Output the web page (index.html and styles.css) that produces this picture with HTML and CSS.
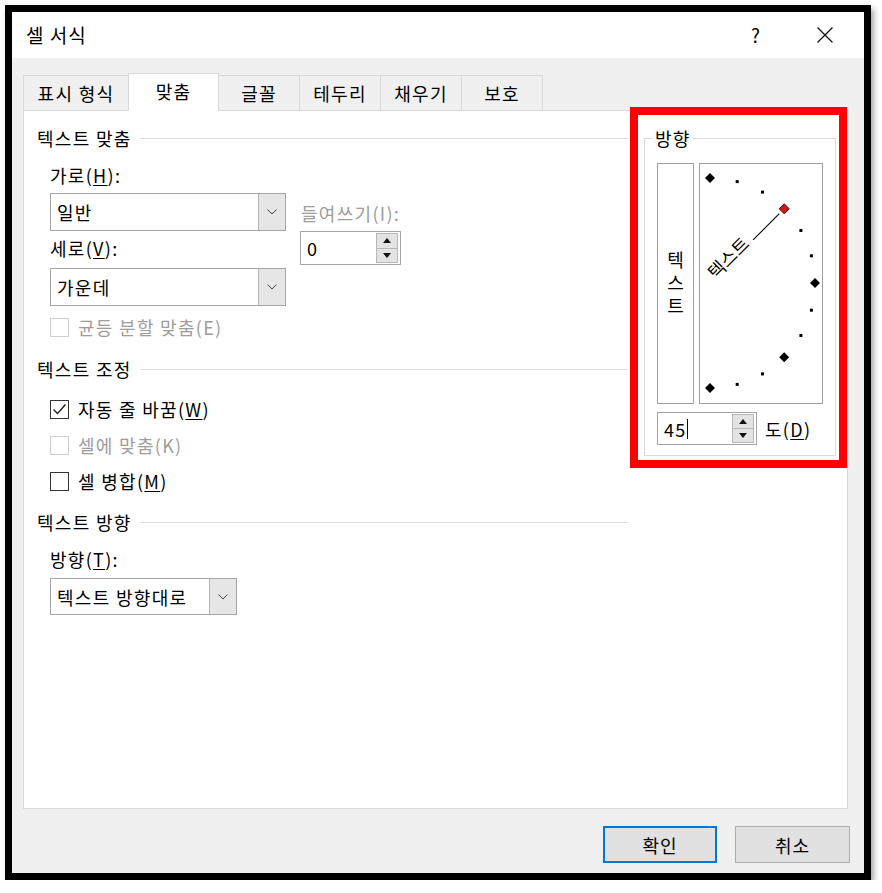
FILE: index.html
```html
<!doctype html>
<html>
    <head>
        <meta charset="utf-8">
        <meta name="viewport" content="width=device-width,initial-scale=1">
        <title>셀 서식</title>
        <link rel="stylesheet" href="styles.css">
    </head>
    <body>
        <div class="dialog">
            <div class="titlebar">
                <span class="title">셀 서식</span>
                <span class="help">?</span>
                <span class="close">
                    <svg width="16" height="16" viewBox="0 0 16 16"><path d="M0.5 0.5 L15.5 15.5 M15.5 0.5 L0.5 15.5" stroke="#111" stroke-width="1.3" fill="none"/></svg>
                </span>
            </div>
            <div class="dialog-body">
                <div class="tabs">
                    <div class="tab tab-first">표시 형식</div>
                    <div class="tab active">맞춤</div>
                    <div class="tab">글꼴</div>
                    <div class="tab">테두리</div>
                    <div class="tab">채우기</div>
                    <div class="tab">보호</div>
                </div>
                <div class="panel">
                    <div class="left">
                        <div class="group-title">텍스트 맞춤</div>
                        <div class="label lbl-h">가로(<u>H</u>):</div>
                        <div class="align-row">
                            <div class="align-stack">
                                <div class="combo combo-align">
                                    <span class="combo-value">일반</span>
                                    <span class="combo-btn"><svg width="10" height="6" viewBox="0 0 10 6"><path d="M0.5 0.5 L5 5 L9.5 0.5" stroke="#444" fill="none"/></svg></span>
                                </div>
                                <div class="label lbl-v">세로(<u>V</u>):</div>
                                <div class="combo combo-align combo-v">
                                    <span class="combo-value">가운데</span>
                                    <span class="combo-btn"><svg width="10" height="6" viewBox="0 0 10 6"><path d="M0.5 0.5 L5 5 L9.5 0.5" stroke="#444" fill="none"/></svg></span>
                                </div>
                            </div>
                            <div class="indent">
                                <div class="label disabled">들여쓰기(I):</div>
                                <div class="spin spin-indent">
                                    <span class="spin-value">0</span>
                                    <span class="spin-btns">
                                        <span class="spin-up"><i class="tri-up"></i></span>
                                        <span class="spin-down"><i class="tri-down"></i></span>
                                    </span>
                                </div>
                            </div>
                        </div>
                        <div class="check disabled check-dist"><span class="box"></span>균등 분할 맞춤(E)</div>

                        <div class="group-title gt-control">텍스트 조정</div>
                        <div class="check check-wrap">
                            <span class="box"><svg width="15" height="13" viewBox="0 0 15 13"><path d="M1.5 6.5 L5.5 10.5 L13.5 1.5" stroke="#222" stroke-width="1.4" fill="none"/></svg></span>자동 줄 바꿈(<u>W</u>)
                        </div>
                        <div class="check disabled check-next"><span class="box"></span>셀에 맞춤(K)</div>
                        <div class="check check-next"><span class="box"></span>셀 병합(<u>M</u>)</div>

                        <div class="group-title gt-dir">텍스트 방향</div>
                        <div class="label lbl-t">방향(<u>T</u>):</div>
                        <div class="combo combo-dir">
                            <span class="combo-value">텍스트 방향대로</span>
                            <span class="combo-btn"><svg width="10" height="6" viewBox="0 0 10 6"><path d="M0.5 0.5 L5 5 L9.5 0.5" stroke="#444" fill="none"/></svg></span>
                        </div>
                    </div>

                    <fieldset class="orient">
                        <legend>방향</legend>
                        <div class="orient-row">
                            <div class="vbox"><span class="vtext">텍스트</span></div>
                            <div class="dial">
                                <svg width="122" height="239" viewBox="0 0 122 239">
                                    <g fill="#000">
                                        <polygon points="10,9 15,14 10,19 5,14"/>
                                        <rect x="35.7" y="16.1" width="3" height="3"/>
                                        <rect x="61" y="26.6" width="3" height="3"/>
                                        <rect x="99.4" y="65" width="3" height="3"/>
                                        <rect x="109.9" y="90.3" width="3" height="3"/>
                                        <polygon points="115,114 120,119 115,124 110,119"/>
                                        <rect x="109.9" y="144.7" width="3" height="3"/>
                                        <rect x="99.4" y="170" width="3" height="3"/>
                                        <polygon points="84.2,188.2 89.2,193.2 84.2,198.2 79.2,193.2"/>
                                        <rect x="61" y="208.4" width="3" height="3"/>
                                        <rect x="35.7" y="218.9" width="3" height="3"/>
                                        <polygon points="10,219 15,224 10,229 5,224"/>
                                    </g>
                                    <g transform="translate(10,119) rotate(-45)">
                                        <text x="6" y="2" class="dial-text">텍스트</text>
                                        <line x1="61" y1="0" x2="98" y2="0" stroke="#000" stroke-width="1"/>
                                    </g>
                                    <polygon points="84.2,39.8 89.2,44.8 84.2,49.8 79.2,44.8" fill="#d01818" stroke="#5a0000" stroke-width="1"/>
                                </svg>
                            </div>
                        </div>
                        <div class="degree-row">
                            <div class="spin spin-deg">
                                <span class="spin-value">45<span class="caret"></span></span>
                                <span class="spin-btns">
                                    <span class="spin-up"><i class="tri-up"></i></span>
                                    <span class="spin-down"><i class="tri-down"></i></span>
                                </span>
                            </div>
                            <span class="deg-label">도(<u>D</u>)</span>
                        </div>
                    </fieldset>
                </div>
                <div class="footer">
                    <button class="btn btn-default">확인</button>
                    <button class="btn">취소</button>
                </div>
            </div>
            <div class="highlight"></div>
        </div>
    </body>
</html>
```

FILE: styles.css
```css
* {
    box-sizing: border-box;
}
body {
    margin: 0;
    background: #fff;
    font-family: "Noto Sans CJK KR", "Noto Sans", sans-serif;
    font-size: 18px;
    letter-spacing: 1.3px;
    color: #000;
}
.dialog {
    position: relative;
    margin: 5px 0 0 5px;
    width: 866px;
    height: 875px;
    border: 7px solid #000;
    background: #f0f0f0;
    box-shadow: 3px 4px 6px rgba(0, 0, 0, 0.35);
    display: flex;
    flex-direction: column;
}
.titlebar {
    height: 46px;
    background: #fff;
    display: flex;
    align-items: center;
    padding-left: 14px;
    font-size: 19px;
    line-height: 22px;
    letter-spacing: 1px;
}
.title {
    flex: 1;
}
.help {
    width: 20px;
    text-align: center;
    margin-right: 51px;
}
.close {
    display: flex;
    margin-right: 31px;
}
.dialog-body {
    flex: 1;
    display: flex;
    flex-direction: column;
    padding: 15px 16px 10px 11px;
}
.tabs {
    display: flex;
    height: 37px;
    align-items: flex-end;
    position: relative;
    z-index: 1;
}
.tab {
    height: 35px;
    min-width: 82px;
    padding: 0 10px;
    border: 1px solid #d9d9d9;
    border-bottom: none;
    margin-left: -1px;
    background: #f0f0f0;
    display: flex;
    align-items: center;
    justify-content: center;
    line-height: 20px;
}
.tab-first {
    margin-left: 0;
    width: 106px;
}
.tab.active {
    height: 38px;
    margin-bottom: -1px;
    width: 91px;
    background: #fff;
    padding-bottom: 3px;
}
.panel {
    height: 699px;
    background: #fff;
    border: 1px solid #d9d9d9;
    display: flex;
    padding: 17px 0 0 13px;
}
.left {
    width: 591px;
    display: flex;
    flex-direction: column;
    align-items: flex-start;
    line-height: 20px;
}
.group-title {
    display: flex;
    align-items: center;
    width: 100%;
    height: 20px;
}
.group-title::after {
    content: "";
    flex: 1;
    height: 1px;
    background: #dcdcdc;
    margin-left: 8px;
}
.label {
    height: 20px;
    margin-left: 13px;
}
.label u,
.check u,
.deg-label u {
    text-underline-offset: 2px;
}
.disabled {
    color: #9d9d9d;
}
.lbl-h {
    margin-top: 17px;
}
.align-row {
    display: flex;
    margin-left: 13px;
    margin-top: 8px;
}
.align-stack {
    display: flex;
    flex-direction: column;
}
.align-stack .label {
    margin-left: 0;
}
.lbl-v {
    margin-top: 7px;
}
.combo {
    display: flex;
    border: 1px solid #a5a5a5;
    background: #fff;
}
.combo-align {
    width: 236px;
    height: 38px;
}
.combo-v {
    margin-top: 10px;
}
.combo-value {
    flex: 1;
    display: flex;
    align-items: center;
    padding-left: 6px;
}
.combo-btn {
    width: 27px;
    background: #e6e6e6;
    border-left: 1px solid #b4b4b4;
    display: flex;
    align-items: center;
    justify-content: center;
}
.indent {
    margin-left: 14px;
    padding-top: 10px;
}
.indent .label {
    margin-left: 1px;
}
.spin {
    display: flex;
    border: 1px solid #a5a5a5;
    background: #fff;
}
.spin-indent {
    width: 101px;
    height: 34px;
    margin-top: 8px;
}
.spin-value {
    flex: 1;
    display: flex;
    align-items: center;
    padding-left: 6px;
}
.spin-btns {
    width: 24px;
    display: flex;
    flex-direction: column;
    padding: 1px 2px 1px 0;
}
.spin-up,
.spin-down {
    flex: 1;
    background: #e3e3e3;
    border: 1px solid #b8b8b8;
    display: flex;
    align-items: center;
    justify-content: center;
}
.spin-down {
    border-top: none;
}
.tri-up {
    width: 0;
    height: 0;
    border-left: 4px solid transparent;
    border-right: 4px solid transparent;
    border-bottom: 5px solid #111;
}
.tri-down {
    width: 0;
    height: 0;
    border-left: 4px solid transparent;
    border-right: 4px solid transparent;
    border-top: 5px solid #111;
}
.check {
    display: flex;
    align-items: center;
    height: 20px;
    margin-left: 13px;
}
.check .box {
    width: 19px;
    height: 19px;
    border: 1px solid #333;
    margin-right: 9px;
    display: flex;
    align-items: center;
    justify-content: center;
    background: #fff;
}
.check.disabled .box {
    border-color: #cfcfcf;
}
.check-dist {
    margin-top: 11px;
}
.gt-control {
    margin-top: 22px;
}
.check-wrap {
    margin-top: 20px;
}
.check-next {
    margin-top: 16px;
}
.gt-dir {
    margin-top: 21px;
}
.lbl-t {
    margin-top: 17px;
}
.combo-dir {
    width: 187px;
    height: 37px;
    margin-left: 13px;
    margin-top: 9px;
}
.orient {
    margin: 0 0 0 16px;
    width: 192px;
    height: 328px;
    border: 1px solid #dcdcdc;
    padding: 15px 12px 0 12px;
    min-width: 0;
}
.orient legend {
    padding: 0 2px;
    margin-left: -4px;
    line-height: 20px;
}
.orient-row {
    display: flex;
    gap: 5px;
}
.vbox {
    width: 37px;
    height: 241px;
    border: 1px solid #a0a0a0;
    display: flex;
    align-items: center;
    justify-content: center;
}
.vtext {
    writing-mode: vertical-rl;
    letter-spacing: 5px;
    line-height: 20px;
    padding-top: 3px;
}
.dial {
    width: 124px;
    height: 241px;
    border: 1px solid #a0a0a0;
}
.dial svg {
    display: block;
}
.dial-text {
    font-family: "Noto Sans CJK KR", sans-serif;
    font-size: 18px;
    letter-spacing: 0;
    fill: #000;
}
.degree-row {
    display: flex;
    align-items: center;
    margin-top: 8px;
}
.spin-deg {
    width: 100px;
    height: 33px;
}
.caret {
    display: inline-block;
    width: 1px;
    height: 20px;
    background: #000;
    vertical-align: middle;
}
.deg-label {
    margin-left: 8px;
    line-height: 20px;
}
.footer {
    display: flex;
    justify-content: flex-end;
    gap: 18px;
    margin-top: 17px;
    margin-right: -2px;
}
.btn {
    width: 115px;
    height: 37px;
    font-family: inherit;
    font-size: 18px;
    letter-spacing: 1px;
    color: #000;
    background: #e1e1e1;
    border: 1px solid #adadad;
    padding: 0;
}
.btn-default {
    width: 114px;
    border: 2px solid #0078d7;
}
.highlight {
    position: absolute;
    left: 618px;
    top: 95px;
    width: 217px;
    height: 361px;
    border: 8px solid #f00;
}
```
